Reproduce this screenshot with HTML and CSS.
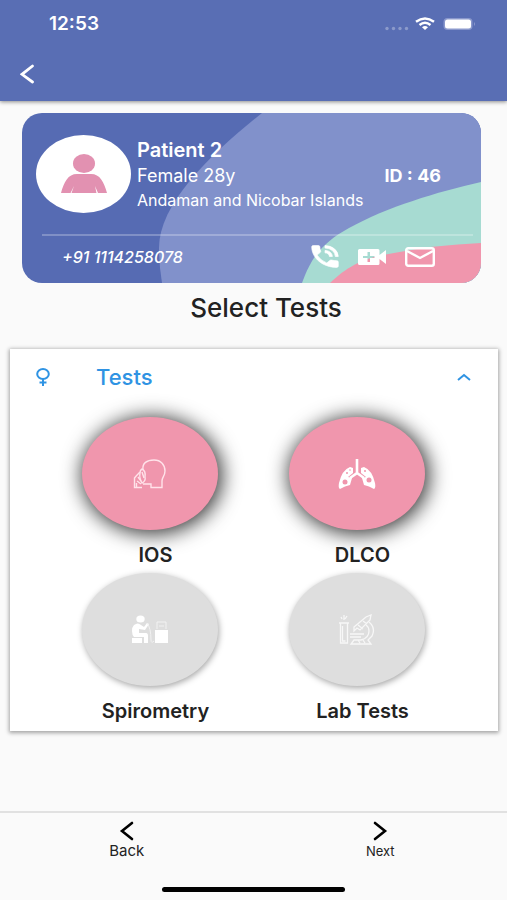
FILE: index.html
```html
<!DOCTYPE html>
<html lang="en">
<head>
<meta charset="utf-8">
<meta name="viewport" content="width=device-width, initial-scale=1">
<title>Select Tests</title>
<link rel="stylesheet" href="styles.css">
</head>
<body>
<div class="app">
  <header class="topbar">
    <div class="status">
      <span class="time">12:53</span>
      <svg class="status-icons" width="92" height="16" viewBox="0 0 92 16" aria-hidden="true">
        <g fill="#fff" opacity=".3"><circle cx="3" cy="12.500" r="1.700"/><circle cx="9.500" cy="12.500" r="1.700"/><circle cx="16" cy="12.500" r="1.700"/><circle cx="22.500" cy="12.500" r="1.700"/></g>
        <g fill="none" stroke="#fff" stroke-width="2.400"><path d="M32 5.800Q41 -1 50 5.800"/><path d="M35.500 9Q41 4.500 46.500 9"/></g>
        <path d="M38 11.200Q41 9 44 11.200L41 14Z" fill="#fff"/>
        <rect x="59.500" y="2" width="29" height="12" rx="4" fill="#8a98cc"/>
        <rect x="61" y="3.500" width="26" height="9" rx="2.500" fill="#fff"/>
        <path d="M90 6q2 2 0 4z" fill="#8a98cc"/>
      </svg>
    </div>
    <button class="icon-button nav-back" aria-label="Go back">
      <svg width="16" height="20" viewBox="0 0 16 20"><path d="M12.500 2 2 10.300 12.500 18" fill="none" stroke="#fff" stroke-width="2.800" stroke-linecap="round"/></svg>
    </button>
  </header>

  <main>
    <section class="patient">
      <svg class="waves" viewBox="0 0 459 170" preserveAspectRatio="none" aria-hidden="true">
        <path d="M240 0C190 40 137 90 137 135Q137 152 140 170H459V0Z" fill="#8191cb"/>
        <path d="M280 170C290 142 302 129 327 115C365 94 415 79 459 69V170Z" fill="#a7dbd2"/>
        <path d="M308 170C325 154 340 145 372 140Q412 132 459 130V170Z" fill="#f096ad"/>
      </svg>
      <div class="summary">
        <div class="avatar">
          <svg width="46" height="40" viewBox="0 0 46 40" aria-hidden="true"><g fill="#e291b1"><ellipse cx="23" cy="9.500" rx="11" ry="9.500"/><path d="M0 39C3 28 7 20 16 20H30C39 20 43 28 46 39H37L34 32L35.500 39H10.500L13 32L9.500 39Z"/></g></svg>
        </div>
        <div class="details">
          <h2>Patient 2</h2>
          <div class="facts"><span>Female 28y</span><strong>ID : 46</strong></div>
          <p>Andaman and Nicobar Islands</p>
        </div>
      </div>
      <div class="contact">
        <em>+91 1114258078</em>
        <div class="actions">
          <button class="icon-button" aria-label="Call">
            <svg width="28" height="23" viewBox="2.500 2.500 19 19" preserveAspectRatio="none"><path fill="#fff" stroke="#fff" stroke-width=".5" d="M20 15.500c-1.250 0-2.450-.2-3.570-.57a1 1 0 0 0-1.020.24l-2.200 2.200a15.050 15.050 0 0 1-6.590-6.580l2.200-2.210a.96.96 0 0 0 .25-1A11.360 11.360 0 0 1 8.500 4c0-.55-.45-1-1-1H4c-.55 0-1 .45-1 1 0 9.390 7.610 17 17 17 .55 0 1-.45 1-1v-3.500c0-.55-.45-1-1-1zM19 12h2a9 9 0 0 0-9-9v2a7 7 0 0 1 7 7zm-4 0h2c0-2.760-2.240-5-5-5v2c1.660 0 3 1.340 3 3z"/></svg>
          </button>
          <button class="icon-button" aria-label="Add video call">
            <svg width="28" height="16" viewBox="0 0 28 16"><path fill="#fff" fill-rule="evenodd" d="M1.500 0H20q1.500 0 1.500 1.500V6L28 1V15L21.500 10v4.500Q21.500 16 20 16H1.500Q0 16 0 14.500V1.500Q0 0 1.500 0ZM9.500 3v4H5v2h4.500v4h2.500V9h4.500V7H12V3Z"/></svg>
          </button>
          <button class="icon-button" aria-label="Send message">
            <svg width="30" height="20" viewBox="0 0 30 20"><g fill="none" stroke="#fff" stroke-width="2.400"><rect x="1.200" y="1.200" width="27.600" height="17.600" rx="2"/><path d="M2 4 15 11 28 4"/></g></svg>
          </button>
        </div>
      </div>
    </section>

    <h1>Select Tests</h1>

    <section class="panel">
      <button class="panel-head" aria-expanded="true">
        <svg width="14" height="18" viewBox="0 0 14 18" aria-hidden="true"><g fill="none" stroke="#2f93e3" stroke-width="2"><ellipse cx="7" cy="6" rx="5.800" ry="5"/><path d="M7 11v7M3.500 14.500h7"/></g></svg>
        <span>Tests</span>
        <svg width="16" height="8" viewBox="0 0 16 8" aria-hidden="true"><path d="M2 7 8 2 14 7" fill="none" stroke="#2f93e3" stroke-width="2"/></svg>
      </button>
      <div class="tests">
        <button class="test selected">
          <span class="disc">
            <svg width="34" height="30" viewBox="0 0 34 30" aria-hidden="true"><g fill="none" stroke="#ffe3ea" stroke-width="1.400"><path d="M10 11C9 4 14 1 21 1C28 1 32 6 32 12C32 17 29 18 29 22V28.500H18V25H10"/><path d="M9 10Q13 12 12 18Q13 22 9 24Q6 19 7 14Q7 11 9 10Z"/><path d="M7 13Q3 17 1.500 19V28.500H9M4 22l4 3M5 18l3 4M3.500 28v-4M9 13l2 6"/></g></svg>
          </span>
          <span class="name">IOS</span>
        </button>
        <button class="test selected">
          <span class="disc">
            <svg width="38" height="30" viewBox="0 0 38 30" aria-hidden="true"><path d="M19 0V14L12 19M19 14L26 19" fill="none" stroke="#fff" stroke-width="2.600"/><path d="M12 8L15 9V14L10 18L14 19L12 26Q7 27 2 30Q0 29 1 24Q4 11 12 8ZM26 8L23 9V14L28 18L24 19L26 26Q31 27 36 30Q38 29 37 24Q34 11 26 8Z" fill="#fff"/><g fill="#f096ad"><circle cx="7" cy="23" r="2.500"/><circle cx="31" cy="21" r="2.500"/><circle cx="9" cy="14" r="1"/><circle cx="27" cy="12" r="1"/><circle cx="12" cy="11" r=".8"/></g></svg>
          </span>
          <span class="name">DLCO</span>
        </button>
        <button class="test">
          <span class="disc">
            <svg width="38" height="30" viewBox="0 0 38 30" aria-hidden="true"><g fill="#fff"><ellipse cx="9.500" cy="4" rx="4.200" ry="3.500"/><path d="M3 10Q7 7 10 10L13 12L16 8L18 9L14 15L8 14V18H15Q17 18 17 21V28H13V22H3Q1 20 1 16Q1 12 3 10ZM1 23H11V28H1ZM24 15H37V28H24Z"/></g><g fill="none" stroke="#f2f2f2"><path d="M16 8Q20 13 20 25Q20 29 23 26M26 14V7H35V14M28 11h5"/></g></svg>
          </span>
          <span class="name">Spirometry</span>
        </button>
        <button class="test">
          <span class="disc">
            <svg width="38" height="32" viewBox="0 0 38 32" aria-hidden="true"><g fill="none" stroke="#f7f7f7" stroke-width="1.300"><path d="M1 9H11M2.500 9V29H9.500V9M4.500 12V27H7.500M6 1V6M3 3l1 2M9 2L7 5"/><path d="M16 13L28 3L33 1L32 6L22 16L19 14L16 17ZM20 11l5 4M25 7l4 3"/><path d="M31 8Q38 14 34 22L30 26L33 30H13L16 26H23Q31 24 31 17Q31 13 28 11M12 20H26M12 23H23M20 26l2 3M25 26l2 3"/></g></svg>
          </span>
          <span class="name">Lab Tests</span>
        </button>
      </div>
    </section>
  </main>

  <footer>
    <nav>
      <button class="step">
        <svg width="16" height="20" viewBox="0 0 16 20" aria-hidden="true"><path d="M13 2 3 10 13 18" fill="none" stroke="#000" stroke-width="2.600" stroke-linecap="round"/></svg>
        <span>Back</span>
      </button>
      <button class="step next">
        <svg width="16" height="20" viewBox="0 0 16 20" aria-hidden="true"><path d="M3 2 13 10 3 18" fill="none" stroke="#000" stroke-width="2.600" stroke-linecap="round"/></svg>
        <span>Next</span>
      </button>
    </nav>
    <div class="home-bar"></div>
  </footer>
</div>
</body>
</html>
```
FILE: styles.css
```css
* { box-sizing: border-box; }

body {
  margin: 0;
  background: #fafafa;
  color: #222;
  font-family: Inter, "Liberation Sans", sans-serif;
}

h1, h2, p { margin: 0; }

button {
  padding: 0;
  border: 0;
  background: none;
  color: inherit;
  font: inherit;
}

svg { display: block; flex: none; }

.app {
  display: flex;
  flex-direction: column;
  min-height: 100vh;
}

main { flex: 1; }

.topbar {
  padding: 12px 31px 17px 20px;
  background: #596eb4;
  box-shadow: 0 1px 4px rgba(0, 0, 0, .45);
}

.status {
  display: flex;
  align-items: center;
  justify-content: space-between;
  padding-left: 29px;
  color: #fff;
}

.time {
  font-size: 19px;
  font-weight: 600;
  line-height: 24px;
}

.nav-back { display: block; margin-top: 28px; }

.patient {
  position: relative;
  margin: 12px 26px 0 22px;
  padding-top: 22px;
  overflow: hidden;
  border-radius: 20px;
  background: #566bb3;
  color: #fff;
}

.waves {
  position: absolute;
  inset: 0;
  width: 100%;
  height: 100%;
}

.summary {
  position: relative;
  display: flex;
  align-items: flex-start;
  gap: 6px;
  padding: 0 40px 0 14px;
}

.avatar {
  display: grid;
  place-items: center;
  flex: none;
  width: 95px;
  height: 78px;
  border-radius: 50%;
  background: #fff;
}

.details { flex: 1; padding-top: 2px; }

.details h2 {
  font-size: 20px;
  font-weight: 600;
  line-height: 26px;
}

.facts {
  display: flex;
  justify-content: space-between;
  font-size: 18px;
  line-height: 26px;
}

.facts strong { font-weight: 700; }

.details p {
  font-size: 16px;
  line-height: 22px;
}

.contact {
  position: relative;
  display: flex;
  align-items: center;
  justify-content: space-between;
  height: 49px;
  margin: 21px 8px 0 20px;
  padding: 0 38px 6px 20px;
  border-top: 2px solid rgba(255, 255, 255, .25);
}

.contact em { font-size: 16px; font-weight: 500; }

.actions {
  display: flex;
  align-items: center;
  gap: 19px;
}

h1 {
  margin-top: 10px;
  padding-left: 25px;
  font-size: 26px;
  font-weight: 500;
  line-height: 30px;
  text-align: center;
}

.panel {
  margin: 26px 9px 0 10px;
  padding-bottom: 6px;
  background: #fff;
  box-shadow: 0 1px 4px 1px rgba(0, 0, 0, .35);
}

.panel-head {
  display: flex;
  align-items: center;
  width: 100%;
  height: 56px;
  padding: 0 26px;
  color: #2f93e3;
  font-size: 22px;
  font-weight: 500;
}

.panel-head span {
  flex: 1;
  padding-left: 46px;
  text-align: left;
}

.tests {
  display: grid;
  grid-template-columns: 1fr 1fr;
  row-gap: 4px;
  padding: 12px 32px 0 42px;
}

.test {
  display: flex;
  flex-direction: column;
  align-items: center;
  padding-bottom: 1px;
}

.disc {
  display: grid;
  place-items: center;
  width: 136px;
  height: 113px;
  margin-right: 12px;
  border-radius: 50%;
  background: #dedede;
  box-shadow: 1px 2px 6px rgba(0, 0, 0, .35);
}

.selected .disc {
  background: #f096ad;
  box-shadow: 2px 2px 20px 2px rgba(0, 0, 0, .8);
}

.name {
  margin-top: 12px;
  font-size: 20px;
  font-weight: 600;
  line-height: 26px;
}

footer {
  padding: 8px 0 8px;
  border-top: 2px solid #e1e1e1;
}

nav {
  display: grid;
  grid-template-columns: 1fr 1fr;
}

.step {
  display: flex;
  flex-direction: column;
  align-items: center;
  font-size: 15px;
  line-height: 20px;
}

.next { font-size: 13px; }

.home-bar {
  width: 36%;
  height: 5px;
  margin: 26px auto 0;
  border-radius: 3px;
  background: #000;
}
```
